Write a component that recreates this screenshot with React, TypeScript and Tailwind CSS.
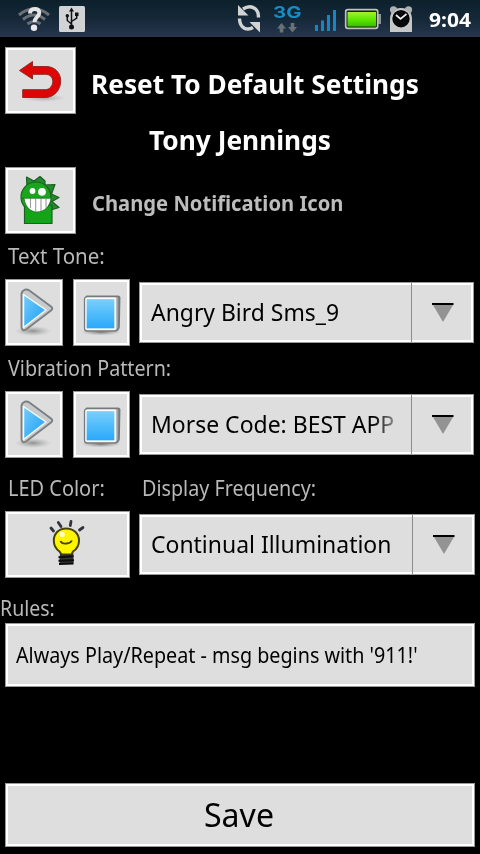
import { useLayoutEffect, useRef, useState, type ReactNode } from "react";

/** A single line of text, condensed or widened to a given advance width. */
function FitText({ width, className = "", children }: { width: number; className?: string; children: ReactNode }) {
  const ref = useRef<HTMLSpanElement>(null);
  const [scale, setScale] = useState(1);
  useLayoutEffect(() => {
    if (ref.current && ref.current.offsetWidth > 0) {
      setScale(width / ref.current.offsetWidth);
    }
  }, [width]);
  return (
    <span className={`block shrink-0 whitespace-nowrap ${className}`} style={{ width }}>
      <span ref={ref} className="inline-block origin-left" style={{ transform: scale === 1 ? undefined : `scaleX(${scale})` }}>
        {children}
      </span>
    </span>
  );
}

const frame = "border border-[#9a9a9a] bg-[#dedede] shadow-[inset_0_0_0_2px_#ffffff] shrink-0";

function IconButton({ label, className, children }: { label: string; className: string; children: ReactNode }) {
  return (
    <button type="button" aria-label={label} className={`${frame} flex h-[67px] items-start justify-start ${className}`}>
      {children}
    </button>
  );
}

function Spinner({ className, textWidth, faded = false, children }: { className: string; textWidth: number; faded?: boolean; children: string }) {
  return (
    <button type="button" className={`${frame} mt-[3px] ml-[9px] flex h-[61px] text-left ${className}`}>
      <span className="flex h-full min-w-0 flex-1 overflow-hidden border-r border-[#8c8c8c] pt-[12px] pl-[11px] text-2xl leading-[34px] text-black">
        <FitText width={textWidth} className={faded ? "[mask-image:linear-gradient(to_right,black_222px,transparent_256px)]" : ""}>{children}</FitText>
      </span>
      <span className="flex h-full w-[61px] pt-[20px] pl-[20px]">
        <svg width="22" height="20" viewBox="0 0 22 20">
          <path d="M1 2H21L11 19Z" fill="#939393" />
          <path d="M0 0H21.500V2H0Z" fill="#000" />
        </svg>
      </span>
    </button>
  );
}

function PlayIcon() {
  return (
    <svg width="54" height="63" viewBox="7 281 54 63">
      <defs>
        <linearGradient id="playBlue" x1="0" y1="0" x2="1" y2="1">
          <stop offset="0" stopColor="#74cdfb" />
          <stop offset="1" stopColor="#189cf8" />
        </linearGradient>
        <radialGradient id="playShade">
          <stop offset="0" stopColor="#777" stopOpacity=".75" />
          <stop offset="1" stopColor="#999" stopOpacity="0" />
        </radialGradient>
      </defs>
      <ellipse cx="33" cy="331" rx="18" ry="5" fill="url(#playShade)" />
      <path d="M21.500 293.500Q22 291 25 289.700Q27 289 29 290.300L51 306.500Q53.500 308.500 51 310.500L26 329.500Q22 332 21.500 327Z" fill="#c9cacc" stroke="#7c7f82" strokeWidth="1.900" />
      <path d="M23.500 294.500L46 310L23.500 327.500Z" fill="url(#playBlue)" stroke="#f3faff" strokeWidth="1.500" strokeLinejoin="round" />
    </svg>
  );
}

function StopIcon() {
  return (
    <svg width="53" height="63" viewBox="75 281 53 63">
      <defs>
        <linearGradient id="stopBlue" x1="0" y1="0" x2="0" y2="1">
          <stop offset="0" stopColor="#7bd0fb" />
          <stop offset="1" stopColor="#27a7fb" />
        </linearGradient>
        <radialGradient id="stopShade">
          <stop offset="0" stopColor="#666" stopOpacity=".9" />
          <stop offset="1" stopColor="#999" stopOpacity="0" />
        </radialGradient>
        <linearGradient id="stopSide" x1="0" y1="0" x2="1" y2="0">
          <stop offset=".86" stopColor="#eeeeef" />
          <stop offset=".94" stopColor="#a0a3a6" />
          <stop offset="1" stopColor="#777a7d" />
        </linearGradient>
      </defs>
      <ellipse cx="101" cy="332" rx="20" ry="3.500" fill="url(#stopShade)" />
      <path d="M84.700 299Q85 297.500 87 296.300H118Q119.700 296.300 119.600 298L119 327Q118.500 330.500 115 331H87Q84.700 331 84.700 328Z" fill="url(#stopSide)" stroke="#777a7d" strokeWidth="1.700" />
      <rect x="86" y="298.500" width="29" height="30.500" fill="url(#stopBlue)" stroke="#fff" strokeWidth="1.300" />
    </svg>
  );
}

function ResetIcon() {
  return (
    <svg width="67" height="63" viewBox="7 49 67 63">
      <defs>
        <radialGradient id="resetShade">
          <stop offset="0" stopColor="#888" stopOpacity=".65" />
          <stop offset="1" stopColor="#aaa" stopOpacity="0" />
        </radialGradient>
      </defs>
      <ellipse cx="44" cy="98" rx="22" ry="4" fill="url(#resetShade)" />
      <path d="M19.500 70.500L32.500 61.500V66.500H46C55 66.500 60.700 73 60.700 81C60.700 90 54 97.500 45 97.500H22.700V89.700H45C50 89.700 52.800 85.500 52.800 81.500C52.800 77.500 50 74.300 45.500 74.300H32.500V79Z" fill="#de0505" stroke="#8d2b28" strokeWidth="1" strokeLinejoin="round" />
    </svg>
  );
}

function MonsterIcon() {
  return (
    <svg width="67" height="63" viewBox="7 169 67 63">
      <g stroke="#1d5f22" strokeWidth="1.200" strokeLinejoin="round">
        <path d="M26.500 177L34 181L40 176.500L45 181V190L27 187ZM44 185L55 184.500L51.500 194L59 197.500L52 201.500L59 207.500L51 210L46 205Z" fill="#238a2d" />
        <path d="M24.500 205H52V223.500H24.500Z" fill="#13a419" />
        <circle cx="36" cy="197" r="15" fill="#19a51e" />
      </g>
      <path d="M25.500 207H51V222.500H25.500Z" fill="#13a419" />
      <path d="M24 198H51C50 206 44.500 212 37 212C30 212 25 206 24 198Z" fill="#fff" />
      <path d="M30.500 198.500V208M35.700 198.500V211M41 198.500V211M46 198.500V207.500" stroke="#9b9b9b" strokeWidth="1.100" />
      <path d="M22 198.300H51C50.300 206 44.500 212 37 212C30 212 24.700 206 24 198.300" fill="none" stroke="#176f1c" strokeWidth=".8" />
      <circle cx="32.500" cy="191" r="2.900" fill="#fff" />
      <circle cx="42" cy="191.800" r="3.900" fill="#fff" />
    </svg>
  );
}

function BulbIcon() {
  return (
    <svg width="121" height="63" viewBox="7 513 121 63">
      <path d="M51 528L53.500 531M58.300 522.500L61 526.500M71 521.500L70.300 525.500M83 527.500L79.500 530" stroke="#30333b" strokeWidth="2.800" strokeLinecap="round" />
      <path d="M66 528.500C58.500 528.500 53.800 534 53.800 540.500C53.800 545.500 56 549 59.500 551.500L61.500 554.500H71.500L73 551.500C77 549 79 545.500 79 540.500C79 534 74 528.500 66 528.500Z" fill="#fff500" stroke="#484207" strokeWidth="2" />
      <ellipse cx="62" cy="534.300" rx="2.800" ry="2.600" fill="#fffed4" />
      <path d="M60.500 541C61.500 543.500 64 543.800 66.500 543.500C69 543.300 71 542.500 71.800 540.500" fill="none" stroke="#4a4308" strokeWidth="1.900" />
      <path d="M60 553.500L66 555L73.500 553.500V563.500H59.500V559Z" fill="#343434" />
      <path d="M58.500 557.300L73.500 556.300M58.500 560.800L74 560.300M59 564L73.500 563.500" stroke="#0c0c0c" strokeWidth="1.900" />
    </svg>
  );
}

function StatusBar() {
  return (
    <header className="flex h-[37px] shrink-0 items-start bg-linear-to-b from-[#0c202c] via-[#152838] to-[#26364d]">
      <svg className="ml-[18px]" width="34" height="37" viewBox="18 0 34 37">
        <g fill="none" stroke="#6c7074" strokeWidth="3">
          <path d="M19 15Q34 2.500 49 15" />
          <path d="M23 19.500Q34 10.500 45 19.500" />
          <path d="M27.500 24Q34 19 40.500 24" />
        </g>
        <path d="M30 13.500Q30 9 34.500 9Q39.300 9 39.300 13C39.300 16.500 34.500 17.500 34.500 22" fill="none" stroke="#e4e4e4" strokeWidth="3.900" />
        <circle cx="34" cy="27.700" r="3.200" fill="#eaeaea" />
      </svg>
      <svg className="ml-[6px]" width="28" height="37" viewBox="58 0 28 37">
        <rect x="59" y="6" width="26" height="26" rx="1.500" fill="#d2d3d4" />
        <path d="M71.500 10V27M71.500 24L67.300 20.500V16M71.500 21.500L76.700 18V14" stroke="#111" strokeWidth="1.500" fill="none" />
        <path d="M71.500 7.500L74 11.500H69ZM75 12.500H78.500V16H75Z" fill="#111" />
        <circle cx="67.300" cy="15.700" r="1.700" fill="#111" />
        <circle cx="71.500" cy="27" r="2.500" fill="#111" />
      </svg>
      <svg className="ml-[150px]" width="26" height="37" viewBox="236 0 26 37">
        <g fill="none" stroke="#d2d4d4" strokeWidth="3.400">
          <path d="M243 9Q250 4.500 255.500 9Q258.500 11.500 258.500 17.500" />
          <path d="M239.500 18.500Q239.500 25.500 244.500 28.300Q249 30 253 27.500" />
        </g>
        <path d="M238 5V15.500H248.500ZM260 32.500V22H249.500Z" fill="#d2d4d4" />
      </svg>
      <div className="ml-[11px] flex w-[29px] flex-col items-start">
        <FitText width={28} className="h-[22px] pt-[3px] font-[Inter] text-[16px] leading-[18px] font-bold text-[#168bc4]">3G</FitText>
        <svg width="28" height="12" viewBox="273 20 28 12">
          <path d="M281.500 21L286 26.500H283.300V30.500H279.700V26.500H277ZM292.500 30.500L288 25H290.700V21H294.300V25H297Z" fill="#687078" />
        </svg>
      </div>
      <svg className="ml-[11px]" width="24" height="37" viewBox="313 0 24 37">
        <path d="M315 25H318V31H315ZM321 20.500H324V31H321ZM327 15H330V31H327ZM333 10H336V31H333Z" fill="#1686c5" />
      </svg>
      <svg className="ml-[7px]" width="39" height="37" viewBox="344 0 39 37">
        <defs>
          <linearGradient id="charge" x1="0" y1="0" x2="0" y2="1">
            <stop offset="0" stopColor="#a2f32c" />
            <stop offset=".55" stopColor="#59e500" />
            <stop offset="1" stopColor="#3cbd00" />
          </linearGradient>
        </defs>
        <path d="M377 14H381V24H377Z" fill="#8d9192" />
        <rect x="345.700" y="9.700" width="32" height="18.600" rx="2" fill="#102500" stroke="#bfc3c0" strokeWidth="1.700" />
        <rect x="347.500" y="12" width="28.500" height="14.500" fill="url(#charge)" />
      </svg>
      <svg className="ml-[6px]" width="24" height="37" viewBox="389 0 24 37">
        <path d="M390 32V20Q390 8 401 8Q412 8 412 20V32Z" fill="#c6c8c8" />
        <circle cx="393.500" cy="9.800" r="3.600" fill="#aeb1b2" />
        <circle cx="408.500" cy="9.800" r="3.600" fill="#aeb1b2" />
        <circle cx="401" cy="18.700" r="10" fill="#c8caca" />
        <circle cx="401" cy="18.700" r="8.700" fill="#050708" />
        <path d="M396 15L400.500 19L406.500 14" fill="none" stroke="#eee" strokeWidth="1.700" />
      </svg>
      <FitText width={42} className="ml-[16px] pt-[5px] text-xl leading-[30px] font-bold text-white">9:04</FitText>
    </header>
  );
}

const label = "text-[22px] leading-[30px] text-[#b9b9b9]";

export default function App() {
  return (
    <div className="flex h-[854px] w-[480px] flex-col overflow-hidden bg-black font-['Noto_Sans',sans-serif]">
      <StatusBar />
      <main className="flex flex-1 flex-col pt-[10px] pl-[5px]">
        <div className="flex h-[67px]">
          <IconButton label="Reset" className="w-[71px] pt-px pl-px"><ResetIcon /></IconButton>
          <FitText width={328} className="ml-[15px] pt-[19px] text-[26px] leading-[36px] font-bold text-white">Reset To Default Settings</FitText>
        </div>
        <div className="flex h-[53px] pt-[8px] pl-[144px]">
          <FitText width={182} className="text-[26px] leading-[36px] font-bold text-white">Tony Jennings</FitText>
        </div>
        <div className="flex h-[67px]">
          <IconButton label="Change icon" className="w-[71px] pt-px pl-px"><MonsterIcon /></IconButton>
          <FitText width={251} className="ml-[16px] pt-[21px] text-[21px] leading-[30px] font-bold text-[#bcbcbc]">Change Notification Icon</FitText>
        </div>
        <div className="flex h-[45px] pt-[6px] pl-[3px]">
          <FitText width={97} className={label}>Text Tone:</FitText>
        </div>
        <div className="flex h-[67px]">
          <IconButton label="Play tone" className="w-[58px] pt-px pl-px"><PlayIcon /></IconButton>
          <IconButton label="Stop tone" className="ml-[10px] w-[57px] pt-px pl-px"><StopIcon /></IconButton>
          <Spinner className="w-[335px]" textWidth={188}>Angry Bird Sms_9</Spinner>
        </div>
        <div className="flex h-[45px] pt-[6px] pl-[3px]">
          <FitText width={163} className={label}>Vibration Pattern:</FitText>
        </div>
        <div className="flex h-[67px]">
          <IconButton label="Play vibration" className="w-[58px] pt-px pl-px"><PlayIcon /></IconButton>
          <IconButton label="Stop vibration" className="ml-[10px] w-[57px] pt-px pl-px"><StopIcon /></IconButton>
          <Spinner className="w-[335px]" textWidth={243} faded>Morse Code: BEST APP</Spinner>
        </div>
        <div className="flex h-[53px] pt-[14px] pl-[3px]">
          <FitText width={97} className={label}>LED Color:</FitText>
          <FitText width={174} className={`ml-[37px] ${label}`}>Display Frequency:</FitText>
        </div>
        <div className="flex h-[67px]">
          <IconButton label="LED color" className="w-[125px] pt-px pl-px"><BulbIcon /></IconButton>
          <Spinner className="w-[336px]" textWidth={240}>Continual Illumination</Spinner>
        </div>
        <div className="-ml-[5px] flex h-[45px] pt-[14px]">
          <FitText width={55} className={label}>Rules:</FitText>
        </div>
        <button type="button" className={`${frame} flex h-[64px] w-[470px] pt-[14px] pl-[10px] text-left`}>
          <FitText width={402} className="text-[22px] leading-[32px] text-black">Always Play/Repeat - msg begins with '911!'</FitText>
        </button>
        <button type="button" className={`${frame} mt-[96px] flex h-[64px] w-[470px] pt-[8px] pl-[198px] text-left`}>
          <FitText width={70} className="text-[33px] leading-[46px] text-black">Save</FitText>
        </button>
      </main>
    </div>
  );
}
